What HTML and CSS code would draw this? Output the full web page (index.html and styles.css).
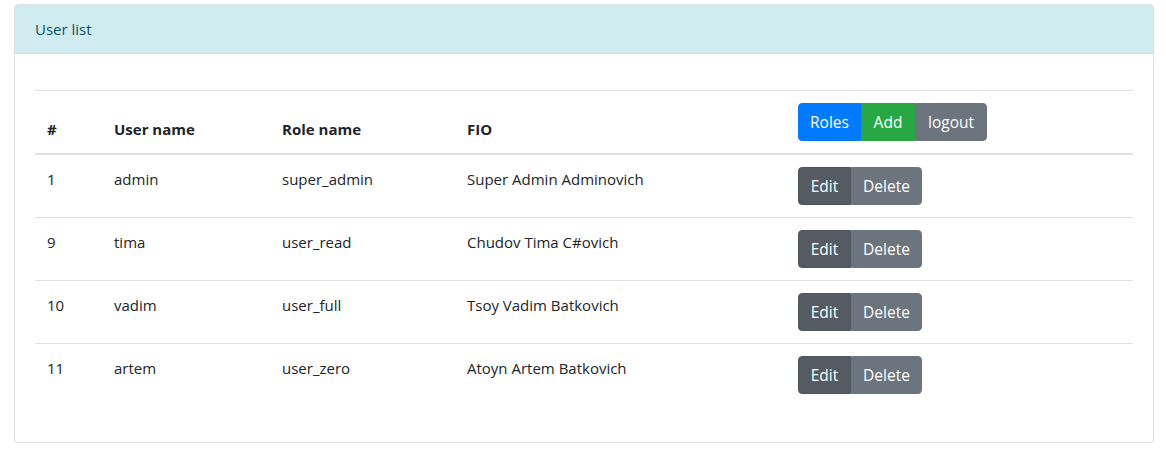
FILE: index.html
```html
<!DOCTYPE html>
<html>
<head>
<meta charset="utf-8">
<title>User list</title>
<link rel="stylesheet" href="styles.css">
</head>
<body>
<div class="page">
  <div class="card">
    <div class="card-header">User list</div>
    <div class="card-body">
      <table class="table">
        <colgroup>
          <col class="c-num"><col class="c-user"><col class="c-role"><col class="c-fio"><col class="c-act">
        </colgroup>
        <thead>
          <tr>
            <th>#</th>
            <th>User name</th>
            <th>Role name</th>
            <th>FIO</th>
            <th>
              <div class="btn-group">
                <button class="btn btn-primary w-roles">Roles</button><button class="btn btn-success w-add">Add</button><button class="btn btn-secondary w-logout">logout</button>
              </div>
            </th>
          </tr>
        </thead>
        <tbody>
          <tr>
            <td>1</td><td>admin</td><td>super_admin</td><td>Super Admin Adminovich</td>
            <td><div class="btn-group"><button class="btn btn-dark w-edit">Edit</button><button class="btn btn-secondary w-delete">Delete</button></div></td>
          </tr>
          <tr>
            <td>9</td><td>tima</td><td>user_read</td><td>Chudov Tima C#ovich</td>
            <td><div class="btn-group"><button class="btn btn-dark w-edit">Edit</button><button class="btn btn-secondary w-delete">Delete</button></div></td>
          </tr>
          <tr>
            <td>10</td><td>vadim</td><td>user_full</td><td>Tsoy Vadim Batkovich</td>
            <td><div class="btn-group"><button class="btn btn-dark w-edit">Edit</button><button class="btn btn-secondary w-delete">Delete</button></div></td>
          </tr>
          <tr>
            <td>11</td><td>artem</td><td>user_zero</td><td>Atoyn Artem Batkovich</td>
            <td><div class="btn-group"><button class="btn btn-dark w-edit">Edit</button><button class="btn btn-secondary w-delete">Delete</button></div></td>
          </tr>
        </tbody>
      </table>
    </div>
  </div>
</div>
</body>
</html>
```

FILE: styles.css
```css
* { box-sizing: border-box; }
html, body { margin: 0; padding: 0; background: #fff; }
body {
  font-family: "Open Sans", "Noto Sans", sans-serif;
  font-size: 15px;
  line-height: 24px;
  color: #212529;
}
.page { padding: 4px 12px 0 14px; }
.card {
  width: 1140px;
  border: 1px solid #dfdfdf;
  border-radius: 4px;
  background: #fff;
}
.card-header {
  background: #d1ecf1;
  border-bottom: 1px solid #bee5eb;
  color: #0c5460;
  padding: 12px 20px;
  border-radius: 3px 3px 0 0;
}
.card-body { padding: 36px 20px 20px; }
.table {
  width: 1098px;
  border-collapse: collapse;
  margin-bottom: 16px;
  table-layout: fixed;
}
.c-num { width: 67px; }
.c-user { width: 168px; }
.c-role { width: 185px; }
.c-fio { width: 331px; }
.c-act { width: 347px; }
.table th, .table td {
  padding: 12px;
  border-top: 1px solid #dee2e6;
  text-align: left;
  vertical-align: top;
}
.table thead th {
  vertical-align: bottom;
  border-bottom: 2px solid #dee2e6;
  font-weight: 700;
}
.table tbody tr:first-child td { border-top: 0; }
.btn-group { display: inline-flex; vertical-align: middle; }
.btn {
  font-family: inherit;
  font-size: 15.5px;
  font-weight: 400;
  line-height: 24px;
  height: 38px;
  padding: 6px 0;
  border: 1px solid transparent;
  color: #fff;
  text-align: center;
  border-radius: 0;
  cursor: pointer;
}
.btn-group .btn:first-child { border-radius: 4px 0 0 4px; }
.btn-group .btn:last-child { border-radius: 0 4px 4px 0; }
.btn-primary { background: #007bff; border-color: #007bff; }
.btn-success { background: #28a745; border-color: #28a745; }
.btn-secondary { background: #6c757d; border-color: #6c757d; }
.btn-dark { background: #545b62; border-color: #4e555b; }
.w-roles { width: 63px; }
.w-add { width: 54px; }
.w-logout { width: 72px; }
.w-edit { width: 53px; }
.w-delete { width: 71px; }
```
